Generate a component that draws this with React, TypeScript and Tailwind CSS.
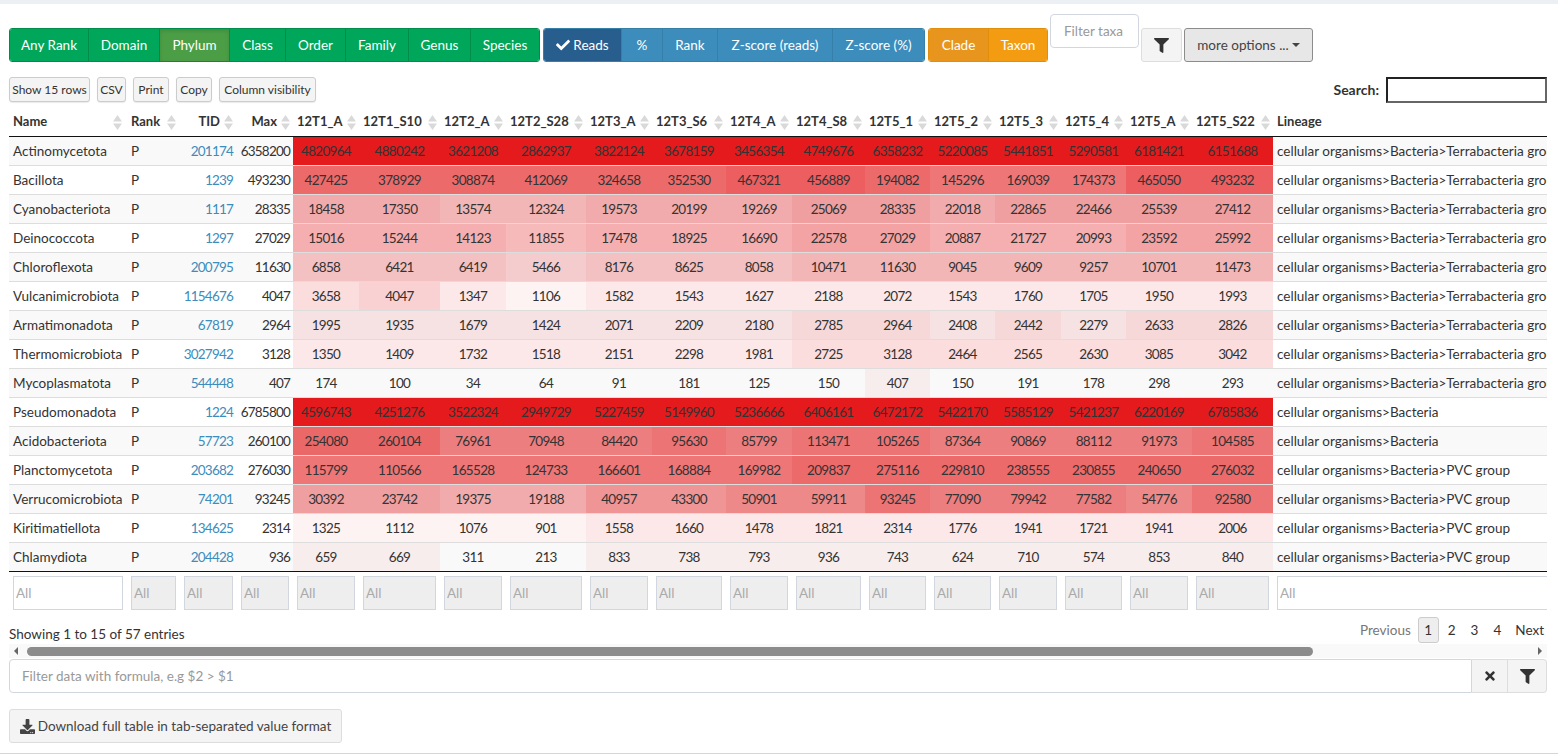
import { FaCheck, FaDownload, FaFilter, FaTimes } from 'react-icons/fa';

const ranks = [
  ['Any Rank', 'w-[79px]'], ['Domain', 'w-[71px]'], ['Phylum', 'w-[70px]'], ['Class', 'w-[56px]'],
  ['Order', 'w-[60px]'], ['Family', 'w-[63px]'], ['Genus', 'w-[62px]'], ['Species', 'w-[68px]'],
];
const metrics = [
  ['%', 'w-[41px]'], ['Rank', 'w-[55px]'], ['Z-score (reads)', 'w-[115px]'], ['Z-score (%)', 'w-[92px]'],
];
const samples = [
  ['12T1_A', 'w-[66px]'], ['12T1_S10', 'w-[81px]'], ['12T2_A', 'w-[66px]'], ['12T2_S28', 'w-[80px]'],
  ['12T3_A', 'w-[66px]'], ['12T3_S6', 'w-[74px]'], ['12T4_A', 'w-[66px]'], ['12T4_S8', 'w-[73px]'],
  ['12T5_1', 'w-[65px]'], ['12T5_2', 'w-[65px]'], ['12T5_3', 'w-[66px]'], ['12T5_4', 'w-[65px]'],
  ['12T5_A', 'w-[66px]'], ['12T5_S22', 'w-[81px]'],
];

const TERRA = 'cellular organisms>Bacteria>Terrabacteria group';
const BACT = 'cellular organisms>Bacteria';
const PVC = 'cellular organisms>Bacteria>PVC group';

type Row = [string, number, number, number[], string];
const rows: Row[] = [
  ['Actinomycetota', 201174, 6358200, [4820964, 4880242, 3621208, 2862937, 3822124, 3678159, 3456354, 4749676, 6358232, 5220085, 5441851, 5290581, 6181421, 6151688], TERRA],
  ['Bacillota', 1239, 493230, [427425, 378929, 308874, 412069, 324658, 352530, 467321, 456889, 194082, 145296, 169039, 174373, 465050, 493232], TERRA],
  ['Cyanobacteriota', 1117, 28335, [18458, 17350, 13574, 12324, 19573, 20199, 19269, 25069, 28335, 22018, 22865, 22466, 25539, 27412], TERRA],
  ['Deinococcota', 1297, 27029, [15016, 15244, 14123, 11855, 17478, 18925, 16690, 22578, 27029, 20887, 21727, 20993, 23592, 25992], TERRA],
  ['Chloroflexota', 200795, 11630, [6858, 6421, 6419, 5466, 8176, 8625, 8058, 10471, 11630, 9045, 9609, 9257, 10701, 11473], TERRA],
  ['Vulcanimicrobiota', 1154676, 4047, [3658, 4047, 1347, 1106, 1582, 1543, 1627, 2188, 2072, 1543, 1760, 1705, 1950, 1993], TERRA],
  ['Armatimonadota', 67819, 2964, [1995, 1935, 1679, 1424, 2071, 2209, 2180, 2785, 2964, 2408, 2442, 2279, 2633, 2826], TERRA],
  ['Thermomicrobiota', 3027942, 3128, [1350, 1409, 1732, 1518, 2151, 2298, 1981, 2725, 3128, 2464, 2565, 2630, 3085, 3042], TERRA],
  ['Mycoplasmatota', 544448, 407, [174, 100, 34, 64, 91, 181, 125, 150, 407, 150, 191, 178, 298, 293], TERRA],
  ['Pseudomonadota', 1224, 6785800, [4596743, 4251276, 3522324, 2949729, 5227459, 5149960, 5236666, 6406161, 6472172, 5422170, 5585129, 5421237, 6220169, 6785836], BACT],
  ['Acidobacteriota', 57723, 260100, [254080, 260104, 76961, 70948, 84420, 95630, 85799, 113471, 105265, 87364, 90869, 88112, 91973, 104585], BACT],
  ['Planctomycetota', 203682, 276030, [115799, 110566, 165528, 124733, 166601, 168884, 169982, 209837, 275116, 229810, 238555, 230855, 240650, 276032], PVC],
  ['Verrucomicrobiota', 74201, 93245, [30392, 23742, 19375, 19188, 40957, 43300, 50901, 59911, 93245, 77090, 79942, 77582, 54776, 92580], PVC],
  ['Kiritimatiellota', 134625, 2314, [1325, 1112, 1076, 901, 1558, 1660, 1478, 1821, 2314, 1776, 1941, 1721, 1941, 2006], PVC],
  ['Chlamydiota', 204428, 936, [659, 669, 311, 213, 833, 738, 793, 936, 743, 624, 710, 574, 853, 840], PVC],
];

// heat scale buckets, read off the picture
const buckets: [number, number][] = [
  [400, 0], [1340, 0.05], [2420, 0.1], [3800, 0.15], [6000, 0.2], [8800, 0.25], [14000, 0.3],
  [22100, 0.35], [35000, 0.4], [45000, 0.45], [65000, 0.5], [92200, 0.55], [180000, 0.6], [440000, 0.65],
  [1000000, 0.7],
];
const heat = (v: number) => {
  const hit = buckets.find(([limit]) => v < limit);
  return `rgba(228, 26, 28, ${hit ? hit[1] : 1})`;
};

function SortIcon() {
  return (
    <svg width="9" height="15" viewBox="0 0 9 15" className="shrink-0" fill="#d9d9d9">
      <path d="M4.5 0 9 6.5H0z" />
      <path d="M4.5 15 0 8.5h9z" />
    </svg>
  );
}

function Th({ label, cls, align }: { label: string; cls?: string; align?: string }) {
  return (
    <th className={`h-[33px] p-0 pt-[4px] border-b border-[#111] text-[13px] font-bold text-[#333] ${cls ?? ''}`}>
      <div className={`flex items-center ${align ?? 'justify-between'}`}>
        <span>{label}</span>
        <SortIcon />
      </div>
    </th>
  );
}

export default function App() {
  return (
    <div className="h-[754px] overflow-hidden bg-white flex flex-col font-[Lato,sans-serif] text-[13.5px] text-[#333] border-b border-[#d2d6de]">
      <div className="h-1 shrink-0 bg-[#ecf0f5]" />

      <div className="pl-[9px] pr-[11px] pt-[10px]">
        {/* Toolbar */}
        <div className="flex items-start">
          <div className="flex mt-[14px] h-[34px] rounded-[3px] overflow-hidden border border-[#008d4c]">
            {ranks.map(([label, w]) => (
              <div
                key={label}
                className={`${w} flex items-center justify-center text-white border-r border-[#008d4c] last:border-r-0 ${label === 'Phylum' ? 'bg-[#4b9e46] shadow-[inset_0_2px_4px_rgba(0,0,0,0.12)]' : 'bg-[#00a65a]'}`}
              >
                {label}
              </div>
            ))}
          </div>
          <div className="flex mt-[14px] ml-[3px] h-[34px] rounded-[3px] overflow-hidden border border-[#367fa9]">
            <div className="w-[77px] flex items-center justify-center gap-[3px] text-white bg-[#285e8e]">
              <FaCheck size={14} />
              Reads
            </div>
            {metrics.map(([label, w]) => (
              <div key={label} className={`${w} flex items-center justify-center text-white bg-[#3c8dbc] border-l border-[#367fa9]`}>
                {label}
              </div>
            ))}
          </div>
          <div className="flex mt-[14px] ml-[3px] h-[34px] rounded-[3px] overflow-hidden border border-[#e08e0b]">
            <div className="w-[60px] flex items-center justify-center text-white bg-[#e8951d] border-r border-[#e08e0b]">Clade</div>
            <div className="w-[58px] flex items-center justify-center text-white bg-[#f39c12]">Taxon</div>
          </div>
          <input
            placeholder="Filter taxa"
            className="w-[89px] h-[34px] ml-[2px] px-[13px] rounded border border-[#d2d6de] outline-none placeholder:text-[#999]"
          />
          <div className="w-[41px] h-[34px] mt-[14px] ml-[2px] flex items-center justify-center rounded-[3px] bg-[#f4f4f4] border border-[#ddd] text-[#333]">
            <FaFilter size={15} />
          </div>
          <div className="w-[129px] h-[34px] mt-[14px] ml-[2px] flex items-center justify-center gap-[3px] rounded-[3px] bg-[#e7e7e7] border border-[#8c8c8c] text-[#444]">
            more options ...
            <span className="w-0 h-0 border-x-4 border-x-transparent border-t-4 border-t-[#444]" />
          </div>
        </div>

        {/* Table buttons + search */}
        <div className="flex items-center mt-[15px] h-[25px] text-[12px] leading-none">
          {['Show 15 rows', 'CSV', 'Print', 'Copy', 'Column visibility'].map((label, i) => (
            <div
              key={label}
              className={`${['w-[81px]', 'w-[29px] ml-[7px]', 'w-[36px] ml-[7px]', 'w-[36px] ml-[7px]', 'w-[97px] ml-[7px]'][i]} h-[25px] flex items-center justify-center rounded-[3px] bg-[#f4f4f4] border border-[#ccc] shadow-[0_1px_1px_rgba(0,0,0,0.08)] whitespace-nowrap`}
            >
              {label}
            </div>
          ))}
          <span className="ml-auto text-[14px] font-bold">Search:</span>
          <input className="w-[161px] h-[26px] ml-[7px] border-2 border-t-[#222] border-l-[#222] border-r-[#666] border-b-[#666] outline-none" />
        </div>

        {/* Table */}
        <div className="mt-[2px] overflow-hidden">
          <table className="table-fixed w-[1804px] border-separate border-spacing-0">
            <colgroup>
              <col className="w-[118px]" />
              <col className="w-[53px]" />
              <col className="w-[57px]" />
              <col className="w-[56px]" />
              {samples.map(([s, w]) => <col key={s} className={w} />)}
              <col className="w-[540px]" />
            </colgroup>
            <thead>
              <tr>
                <Th label="Name" cls="text-left pl-1 pr-[5px]" />
                <Th label="Rank" cls="text-left pl-1 pr-1" />
                <Th label="TID" cls="pr-1" align="justify-end gap-1" />
                <Th label="Max" cls="pr-[3px]" align="justify-end gap-1" />
                {samples.map(([s]) => <Th key={s} label={s} cls="pl-1 pr-[3px]" />)}
                <th className="h-[33px] p-0 pt-[4px] pl-1 text-left text-[13px] font-bold border-b border-[#111]">Lineage</th>
              </tr>
            </thead>
            <tbody>
              {rows.map(([name, tid, max, values, lineage], i) => {
                const line = i === rows.length - 1 ? 'border-b border-[#111]' : 'border-b border-[#ddd]';
                return (
                  <tr key={name} className={i % 2 === 0 ? 'bg-[#f9f9f9]' : 'bg-white'}>
                    <td className={`h-[29px] p-0 pl-1 whitespace-nowrap ${line}`}>{name}</td>
                    <td className={`p-0 pl-1 ${line}`}>P</td>
                    <td className={`p-0 pr-1 text-right text-[#3c8dbc] tracking-[-0.8px] ${line}`}>{tid}</td>
                    <td className={`p-0 pr-[3px] text-right tracking-[-0.8px] ${line}`}>{max}</td>
                    {values.map((v, j) => (
                      <td key={j} className={`p-0 text-center tracking-[-0.7px] ${line}`} style={{ backgroundColor: heat(v) }}>
                        {v}
                      </td>
                    ))}
                    <td className={`p-0 pl-1 whitespace-nowrap ${line}`}>{lineage}</td>
                  </tr>
                );
              })}
            </tbody>
            <tfoot>
              <tr>
                {[true, false, false, false, ...samples.map(() => false), true].map((open, i) => (
                  <td key={i} className="p-1 h-[42px]">
                    <input
                      placeholder="All"
                      disabled={!open}
                      className={`w-full h-[34px] px-[2px] border border-[#d2d6de] outline-none placeholder:text-[#aaa] ${open ? 'bg-white' : 'bg-[#eee]'}`}
                    />
                  </td>
                ))}
              </tr>
            </tfoot>
          </table>
        </div>

        {/* Info + pagination */}
        <div className="flex items-end justify-between mt-[3px] h-[26px]">
          <span className="leading-[20px] -mb-px">Showing 1 to 15 of 57 entries</span>
          <div className="flex items-center h-[26px] pr-[3px]">
            <span className="text-[#777] mr-[7px]">Previous</span>
            <span className="w-[21px] h-[26px] flex items-center justify-center rounded-[3px] border border-[#ccc] bg-[#eeeeee]">1</span>
            <span className="ml-[9px]">2</span>
            <span className="ml-[15px]">3</span>
            <span className="ml-[15px]">4</span>
            <span className="ml-[14px]">Next</span>
          </div>
        </div>

        {/* Horizontal scrollbar */}
        <div className="flex items-center h-[14px] mt-px bg-[#f9f9f9]">
          <div className="w-[14px] flex justify-center">
            <span className="w-0 h-0 border-y-[4px] border-y-transparent border-r-[4px] border-r-[#666]" />
          </div>
          <div className="flex-1 pl-1">
            <div className="w-[1286px] h-[9px] rounded-full bg-[#8c8c8c]" />
          </div>
          <div className="w-[14px] flex justify-center">
            <span className="w-0 h-0 border-y-[4px] border-y-transparent border-l-[4px] border-l-[#666]" />
          </div>
        </div>

        {/* Formula filter */}
        <div className="flex mt-px h-[34px]">
          <input
            placeholder="Filter data with formula, e.g $2 > $1"
            className="flex-1 px-[12px] border border-[#d2d6de] rounded-l outline-none placeholder:text-[#999]"
          />
          <div className="w-[36px] flex items-center justify-center bg-[#f4f4f4] border border-l-0 border-[#ddd] text-[#333]">
            <FaTimes size={14} />
          </div>
          <div className="w-[39px] flex items-center justify-center bg-[#f4f4f4] border border-l-0 border-[#ddd] rounded-r text-[#333]">
            <FaFilter size={15} />
          </div>
        </div>

        <div className="w-[333px] h-[34px] mt-4 flex items-center justify-center gap-[3px] rounded-[3px] bg-[#f4f4f4] border border-[#ddd] text-[#444]">
          <FaDownload size={15} />
          Download full table in tab-separated value format
        </div>
      </div>
    </div>
  );
}
